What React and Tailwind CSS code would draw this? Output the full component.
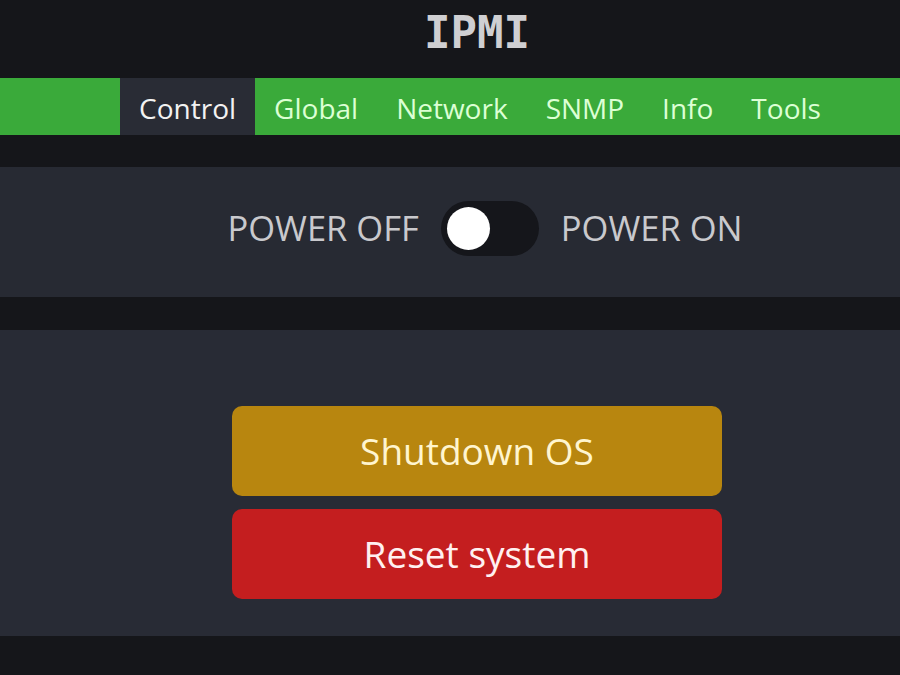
import React, { useState } from 'react';

const tabs = ['Control', 'Global', 'Network', 'SNMP', 'Info', 'Tools'];

export default function App() {
  const [active, setActive] = useState('Control');
  const [power, setPower] = useState(false);

  return (
    <div className="min-h-screen w-[900px] h-[675px] overflow-hidden bg-[#15161a] font-['Open_Sans',sans-serif]">
      {/* Header */}
      <div className="h-[78px] flex items-center justify-center pl-[54px]">
        <h1 className="font-['DejaVu_Sans_Mono',monospace] font-bold text-[44px] leading-none text-[#cfcfd2] -mt-[12px]">
          IPMI
        </h1>
      </div>

      {/* Nav */}
      <div className="h-[57px] bg-[#3aaa3a] flex justify-center pl-[60px]">
        {tabs.map((t) => (
          <button
            key={t}
            onClick={() => setActive(t)}
            className={`px-[19px] pt-[2px] h-full text-[28px] leading-none ${
              active === t ? 'bg-[#292c35] text-[#f2f2f2]' : 'text-[#dcffd4]'
            }`}
          >
            {t}
          </button>
        ))}
      </div>

      <div className="h-[32px]" />

      {/* Power panel */}
      <div className="h-[130px] bg-[#272a33] flex items-center justify-center gap-[22px] pl-[70px] pb-[8px]">
        <span className="text-[34.5px] text-[#c9c9cd] leading-none">POWER OFF</span>
        <button
          onClick={() => setPower(!power)}
          className={`w-[98px] h-[55px] rounded-full bg-[#15161b] flex items-center px-[6px] ${
            power ? 'justify-end' : 'justify-start'
          }`}
        >
          <span className="w-[43px] h-[43px] rounded-full bg-white block" />
        </button>
        <span className="text-[34.5px] text-[#c9c9cd] leading-none">POWER ON</span>
      </div>

      <div className="h-[33px]" />

      {/* Actions panel */}
      <div className="h-[306px] bg-[#282b35] flex flex-col items-center pt-[76px] gap-[13px] pl-[54px]">
        <button className="w-[490px] h-[90px] rounded-[10px] bg-[#b8860f] text-[37px] text-[#fff5cf]">
          Shutdown OS
        </button>
        <button className="w-[490px] h-[90px] rounded-[10px] bg-[#c41e1f] text-[37px] text-[#fff0f0]">
          Reset system
        </button>
      </div>
    </div>
  );
}
